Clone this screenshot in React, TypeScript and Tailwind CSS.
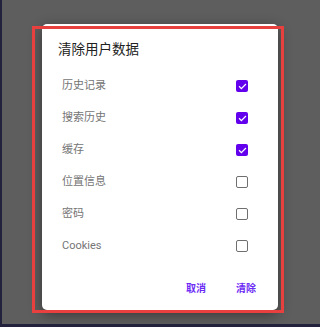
import React from "react";

const items = [
  { label: "历史记录", checked: true },
  { label: "搜索历史", checked: true },
  { label: "缓存", checked: true },
  { label: "位置信息", checked: false },
  { label: "密码", checked: false },
  { label: "Cookies", checked: false },
];

function Checkbox({ checked }: { checked: boolean }) {
  if (checked) {
    return (
      <div className="w-[12px] h-[12px] rounded-[2px] bg-[#6200ee] flex items-center justify-center">
        <svg width="9" height="9" viewBox="0 0 24 24" fill="none">
          <path d="M4 12.5l5 5L20 6.5" stroke="#fff" strokeWidth="3.2" strokeLinecap="square" />
        </svg>
      </div>
    );
  }
  return <div className="w-[12px] h-[12px] rounded-[2px] border-[1.5px] border-[#6f6f6f]" />;
}

export default function App() {
  return (
    <div
      className="relative w-[320px] h-[327px] bg-[#5e5e5e] flex flex-col border-l-[2px] border-[#22223c] overflow-hidden"
      style={{ fontFamily: '"Roboto", "Noto Sans CJK SC", sans-serif' }}
    >
      <div className="flex-1 pt-[24px] pl-[40px]">
        {/* dialog */}
        <div className="w-[236px] h-[286px] bg-white rounded-[5px] shadow-[0_4px_14px_rgba(0,0,0,0.45)] flex flex-col">
          <div className="pt-[15px] pl-[16px] h-[20px] box-content text-[13.5px] leading-[20px] text-[#212121]">
            清除用户数据
          </div>
          <div className="mt-[11px] flex flex-col">
            {items.map((it) => (
              <div key={it.label} className="h-[32px] flex items-center pl-[20px] pr-[30px]">
                <span className="flex-1 text-[11px] text-[#757575]">{it.label}</span>
                <Checkbox checked={it.checked} />
              </div>
            ))}
          </div>
          <div className="flex-1 flex items-center justify-end pr-[22px] gap-[30px] pt-[4px]">
            <span className="text-[10px] font-semibold text-[#6d2cf5]">取消</span>
            <span className="text-[10px] font-semibold text-[#6d2cf5]">清除</span>
          </div>
        </div>
      </div>
      <div className="h-[3px] bg-[#22223c]" />
      {/* highlight outline */}
      <div className="absolute left-[30px] top-[26px] w-[252px] h-[287px] border-[3px] border-[#e8403f] pointer-events-none" />
    </div>
  );
}
